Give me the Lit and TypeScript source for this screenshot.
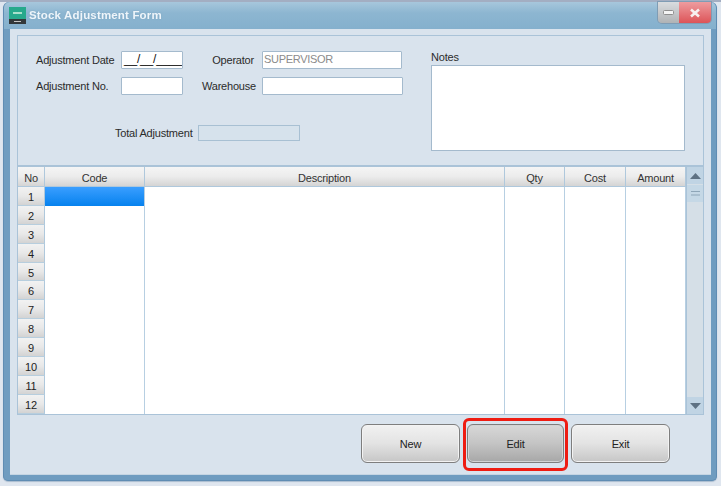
import { LitElement, html, css } from "lit";
import { customElement } from "lit/decorators.js";

@customElement("app-root")
export class AppRoot extends LitElement {
  static styles = css`
    :host { display: block; width: 721px; height: 486px; background: #dfe6ef; overflow: hidden; font-family: "Liberation Sans", Arial, sans-serif; font-size: 11px; letter-spacing: -0.2px; color: #2b2b2b; }
    * { box-sizing: border-box; }
    .top { height: 2px; background: #a3aec2; }
    .win { margin: 0 4px 0 3px; height: 479px; display: flex; flex-direction: column; border-radius: 6px 6px 5px 5px; background: #6f9cc0; border: 1px solid #5f8cb3; border-top: 0; box-shadow: 0 1px 1px #a9bccf; filter: blur(0.3px); }
    .title { height: 27px; flex: none; display: flex; align-items: flex-start; background: linear-gradient(#a7c7dc 0, #8db6d1 40%, #85b0cd 100%); border-radius: 6px 6px 0 0; padding: 5px 0 0 5px; }
    .ico { flex: none; width: 17px; height: 17px; display: block; }
    .cap { margin: 1px 0 0 3px; color: #eef5fa; font-weight: bold; font-size: 11.5px; letter-spacing: 0.17px; line-height: 14px; text-shadow: 0 0 2px #7fa6c2; }
    .ctl { margin-left: auto; margin-right: 5px; margin-top: -5px; display: flex; height: 21px; border-radius: 0 0 4px 4px; overflow: hidden; box-shadow: 0 0 0 1px #7f9cb4; }
    .min, .close { display: flex; align-items: center; justify-content: center; }
    .min { width: 21px; background: linear-gradient(#d9dcdf, #b0b3b5); }
    .close { width: 32px; background: linear-gradient(#ee9c9f, #dd5458); }
    .client { flex: 1; margin: 0 5px 5px 6px; background: #d9e3ed; padding: 6px 7px 0 7px; border: 1px solid #c5d5e3; border-width: 0 0 1px 0; display: flex; flex-direction: column; }
    .panel { height: 131px; flex: none; border: 1px solid #aac3d8; display: flex; padding: 15px 17px 0 18px; }
    .left { width: 395px; flex: none; display: flex; flex-direction: column; }
    .row { display: flex; align-items: center; height: 18px; margin-bottom: 8px; }
    .lab { line-height: 18px; white-space: nowrap; }
    .l1 { width: 85px; }
    .l2 { width: 79px; text-align: right; padding-right: 8px; }
    .l2w { padding-right: 6px; }
    .inp { height: 18px; background: #fff; border: 1px solid #a4bacd; border-radius: 1px; line-height: 15px; padding: 0 1px; }
    .date { width: 62px; color: #111; letter-spacing: -0.2px; font-size: 12px; line-height: 15px; overflow: hidden; white-space: nowrap; padding: 0 2px; }
    .op { width: 140px; color: #8b8b8b; letter-spacing: -0.3px; }
    .wh { width: 141px; }
    .totrow { display: flex; align-items: center; height: 16px; margin-top: 22px; padding-left: 79px; }
    .tot { width: 102px; height: 16px; margin-left: 5px; background: #d6e2ec; border: 1px solid #a8c0d3; }
    .notes { flex: 1; display: flex; flex-direction: column; margin-top: -1px; }
    .notes .lab { line-height: 14px; height: 15px; }
    .ta { width: 254px; height: 86px; background: #fff; border: 1px solid #a4bacd; }
    .gridbox { height: 249px; flex: none; border: 1px solid #aac3d8; display: flex; }
    .grid { width: 668px; flex: none; display: grid; grid-template-columns: 27px 100px 360px 60px 61px 60px; grid-template-rows: 20px repeat(12, 18.9px); background: #fff; height: 247px; overflow: hidden; }
    .h { background: linear-gradient(#f5f5f5 0, #ececec 50%, #d4d4d4 100%); border-right: 1px solid #afc8dc; border-bottom: 1px solid #afc8dc; text-align: center; line-height: 22px; color: #333; }
    .n { background: linear-gradient(#f2f2f2 0, #e8e8e8 50%, #d3d3d3 100%); border-right: 1px solid #afc8dc; border-bottom: 1px solid #b7cede; text-align: center; line-height: 20px; color: #222; }
    .c { border-right: 1px solid #b7cfe2; }
    .sel { background: linear-gradient(#3a9eff, #0682ee); }
    .sb { flex: 1; display: flex; flex-direction: column; background: #d5dfe7; border-left: 1px solid #aac3d8; }
    .arr { height: 17px; background: #c0d4e4; flex: none; display: flex; align-items: center; justify-content: center; }
    .thumb { height: 17px; margin-top: 1px; background: #c5d8e6; flex: none; display: flex; align-items: center; justify-content: center; }
    .sp { flex: 1; }
    .btns { display: flex; justify-content: flex-end; align-items: flex-start; padding: 3px 34px 0 0; height: 52px; flex: none; }
    .btn { width: 99px; height: 39px; margin-top: 6px; border-radius: 6px; border: 1px solid #7e7e7e; background: linear-gradient(#f1f1f1 0, #e3e3e3 50%, #c6c6c6 100%); box-shadow: inset 0 0 0 1px #f3f3f3; display: flex; align-items: center; justify-content: center; color: #222; }
    .mark { flex: none; padding: 3px 1px 5px; border: 3px solid #ee1c12; border-radius: 6px; margin: 0 3px; }
    .edit { width: 97px; margin-top: 0; background: linear-gradient(#d8d8d8 0, #c4c4c4 50%, #a7a7a7 100%); box-shadow: inset 0 0 0 1px #d3d3d3; }
  `;

  render() {
    const rows = Array.from({ length: 12 }, (_, i) => i + 1);
    return html`
      <div class="top"></div>
      <div class="win">
        <div class="title">
          <svg class="ico" viewBox="0 0 17 17">
            <rect width="17" height="12" fill="#27a98c" />
            <rect y="12" width="17" height="5" fill="#33383a" />
            <rect x="4" y="5" width="9" height="2" fill="#a9e0cc" />
            <rect x="5" y="14" width="7" height="1" fill="#c5c5c5" />
          </svg>
          <div class="cap">Stock Adjustment Form</div>
          <div class="ctl">
            <div class="min">
              <svg width="11" height="5" viewBox="0 0 11 5"><rect x="0.5" y="0.5" width="10" height="4" rx="1" fill="#f4f4f4" stroke="#8f8f8f" /></svg>
            </div>
            <div class="close">
              <svg width="12" height="10" viewBox="0 0 12 10"><path d="M2 1.5 L10 8.5 M10 1.5 L2 8.5" stroke="#f7f0f0" stroke-width="2.6" /></svg>
            </div>
          </div>
        </div>
        <div class="client">
          <div class="panel">
            <div class="left">
              <div class="row">
                <div class="lab l1">Adjustment Date</div>
                <div class="inp date">__/__/____</div>
                <div class="lab l2">Operator</div>
                <div class="inp op">SUPERVISOR</div>
              </div>
              <div class="row">
                <div class="lab l1">Adjustment No.</div>
                <div class="inp date"></div>
                <div class="lab l2 l2w">Warehouse</div>
                <div class="inp wh"></div>
              </div>
              <div class="totrow">
                <div class="lab">Total Adjustment</div>
                <div class="tot"></div>
              </div>
            </div>
            <div class="notes">
              <div class="lab">Notes</div>
              <div class="ta"></div>
            </div>
          </div>
          <div class="gridbox">
            <div class="grid">
              <div class="h">No</div>
              <div class="h">Code</div>
              <div class="h">Description</div>
              <div class="h">Qty</div>
              <div class="h">Cost</div>
              <div class="h">Amount</div>
              ${rows.map(
                (r) => html`
                  <div class="n">${r}</div>
                  <div class="c ${r === 1 ? "sel" : ""}"></div>
                  <div class="c"></div>
                  <div class="c"></div>
                  <div class="c"></div>
                  <div class="c"></div>
                `
              )}
            </div>
            <div class="sb">
              <div class="arr"><svg width="11" height="6" viewBox="0 0 11 6"><path d="M5.5 0 L11 6 L0 6 Z" fill="#5d7183" /></svg></div>
              <div class="thumb"><svg width="9" height="5" viewBox="0 0 9 5"><path d="M0 .5H9M0 4H9" stroke="#8ea6b8" /></svg></div>
              <div class="sp"></div>
              <div class="arr"><svg width="11" height="6" viewBox="0 0 11 6"><path d="M0 0 L11 0 L5.5 6 Z" fill="#5d7183" /></svg></div>
            </div>
          </div>
          <div class="btns">
            <div class="btn">New</div>
            <div class="mark"><div class="btn edit">Edit</div></div>
            <div class="btn">Exit</div>
          </div>
        </div>
      </div>
    `;
  }
}
